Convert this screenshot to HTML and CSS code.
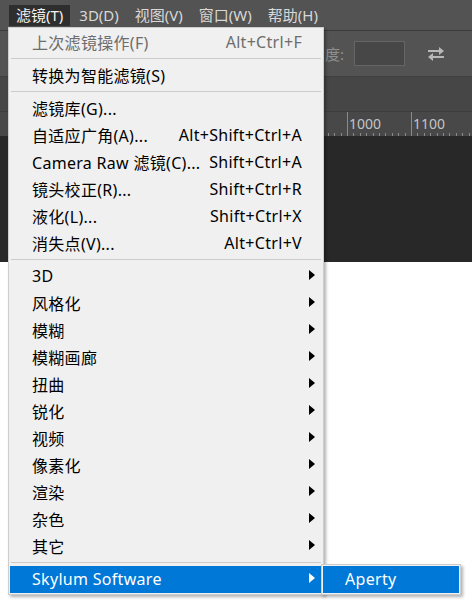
FILE: index.html
```html
<!DOCTYPE html>
<html lang="zh-CN">
<head>
<meta charset="UTF-8">
<title>滤镜菜单</title>
<link rel="stylesheet" href="styles.css">
</head>
<body>

<!-- app menu bar -->
<div class="menubar">
    <span class="menubar-item active">滤镜(T)</span>
    <span class="menubar-item">3D(D)</span>
    <span class="menubar-item">视图(V)</span>
    <span class="menubar-item">窗口(W)</span>
    <span class="menubar-item">帮助(H)</span>
</div>

<!-- tool options (mostly hidden under the menu) -->
<div class="options">
    <span class="opt-label">度:</span>
    <span class="opt-input"></span>
    <svg class="swap" viewBox="0 0 18 16" fill="currentColor">
        <path d="M1 4h11V1l5 4-5 4V6H1z"/>
        <path d="M17 10H6V7l-5 4 5 4v-3h11z"/>
    </svg>
</div>

<div class="band"></div>

<!-- ruler: labels under the menu are left out -->
<div class="ruler">
    <span class="ruler-cell"></span>
    <span class="ruler-cell"></span>
    <span class="ruler-cell"></span>
    <span class="ruler-cell"></span>
    <span class="ruler-cell"></span>
    <span class="ruler-cell">1000</span>
    <span class="ruler-cell">1100</span>
    <span class="ruler-cell"></span>
</div>

<div class="canvas"></div>
<div class="paper"></div>

<!-- dropdown -->
<div class="menu">
    <div class="item disabled"><span>上次滤镜操作(F)</span><span class="key">Alt+Ctrl+F</span><span></span></div>
    <div class="sep"></div>
    <div class="item"><span>转换为智能滤镜(S)</span><span class="key"></span><span></span></div>
    <div class="sep"></div>
    <div class="item"><span>滤镜库(G)...</span><span class="key"></span><span></span></div>
    <div class="item"><span>自适应广角(A)...</span><span class="key">Alt+Shift+Ctrl+A</span><span></span></div>
    <div class="item"><span>Camera Raw 滤镜(C)...</span><span class="key">Shift+Ctrl+A</span><span></span></div>
    <div class="item"><span>镜头校正(R)...</span><span class="key">Shift+Ctrl+R</span><span></span></div>
    <div class="item"><span>液化(L)...</span><span class="key">Shift+Ctrl+X</span><span></span></div>
    <div class="item"><span>消失点(V)...</span><span class="key">Alt+Ctrl+V</span><span></span></div>
    <div class="sep"></div>
    <div class="item"><span>3D</span><span class="key"></span><span class="arrow"></span></div>
    <div class="item"><span>风格化</span><span class="key"></span><span class="arrow"></span></div>
    <div class="item"><span>模糊</span><span class="key"></span><span class="arrow"></span></div>
    <div class="item"><span>模糊画廊</span><span class="key"></span><span class="arrow"></span></div>
    <div class="item"><span>扭曲</span><span class="key"></span><span class="arrow"></span></div>
    <div class="item"><span>锐化</span><span class="key"></span><span class="arrow"></span></div>
    <div class="item"><span>视频</span><span class="key"></span><span class="arrow"></span></div>
    <div class="item"><span>像素化</span><span class="key"></span><span class="arrow"></span></div>
    <div class="item"><span>渲染</span><span class="key"></span><span class="arrow"></span></div>
    <div class="item"><span>杂色</span><span class="key"></span><span class="arrow"></span></div>
    <div class="item"><span>其它</span><span class="key"></span><span class="arrow"></span></div>
    <div class="sep"></div>
    <div class="item hover"><span>Skylum Software</span><span class="key"></span><span class="arrow"></span></div>
</div>

<!-- submenu -->
<div class="menu submenu">
    <div class="item hover"><span>Aperty</span><span class="key"></span><span></span></div>
</div>

</body>
</html>
```

FILE: styles.css
```css
/* ===== BASE ===== */
*{box-sizing:border-box;margin:0;padding:0;}
body{
    font-family:"Noto Sans","Noto Sans CJK SC",sans-serif;
    background:#fff;
    overflow:hidden;
}

/* ===== MENU BAR ===== */
.menubar{
    height:31px;
    background:#535353;
    border-bottom:1px solid #3b3b3b;
    display:flex;
    align-items:flex-start;
    padding:5px 0 0 9px;
    gap:2px;
}
.menubar-item{
    height:21px;
    line-height:21px;
    padding:0 7px;
    font-size:15px;
    color:#d8d8d8;
}
.menubar-item.active{
    background:#2e2e2e;
    color:#f2f2f2;
}

/* ===== OPTIONS BAR ===== */
.options{
    height:46px;
    background:#535353;
    border-bottom:1px solid #3f3f3f;
    display:flex;
    align-items:center;
    padding-left:325px;
}
.opt-label{
    font-size:15px;
    color:#8e8e8e;
    margin-right:10px;
}
.opt-input{
    width:51px;
    height:25px;
    background:#474747;
    border:1px solid #666;
}
.swap{
    width:18px;
    height:16px;
    margin-left:22px;
    color:#b8b8b8;
}

.band{
    height:35px;
    background:#464646;
    border-bottom:1px solid #3c3c3c;
}

/* ===== RULER ===== */
.ruler{
    height:24px;
    background:#484848;
    display:flex;
    padding-left:27px;
    overflow:hidden;
    background-image:repeating-linear-gradient(to right,#8a8a8a 0 1px,transparent 1px 6.4px);
    background-size:100% 3px;
    background-position:27px 100%;
    background-repeat:no-repeat;
}
.ruler-cell{
    flex:0 0 64px;
    border-left:1px solid #8a8a8a;
    padding:3px 0 0 1px;
    font-size:14px;
    line-height:18px;
    color:#c4c4c4;
}

.canvas{
    height:126px;
    background:#282828;
}
.paper{height:400px;background:#fff;}

/* ===== DROPDOWN ===== */
.menu{
    position:absolute;
    left:8px;
    top:27px;
    width:316px;
    padding:1px;
    background:#f0f0f0;
    border:1px solid #cdcdcd;
    box-shadow:2px 2px 3px rgba(0,0,0,.3);
}
.item{
    height:27px;
    display:grid;
    grid-template-columns:1fr auto 20px;
    align-items:center;
    padding:0 0 1px 22px;
    font-size:16px;
    letter-spacing:.3px;
    color:#000;
    white-space:nowrap;
}
.item.disabled{color:#6d6d6d;}
.item.hover{background:#0078d7;color:#fff;}
.arrow{
    width:0;
    height:0;
    margin:-2px 0 0 7px;
    border-left:6px solid #000;
    border-top:5px solid transparent;
    border-bottom:5px solid transparent;
}
.hover .arrow{border-left-color:#fff;}
.sep{
    height:6px;
    margin:0 1px;
    border-top:2px solid transparent;
    background:linear-gradient(#cbcbcb,#cbcbcb) no-repeat 0 0/100% 1px;
}

/* ===== SUBMENU ===== */
.submenu{
    left:321px;
    top:564px;
    width:140px;
}
```
